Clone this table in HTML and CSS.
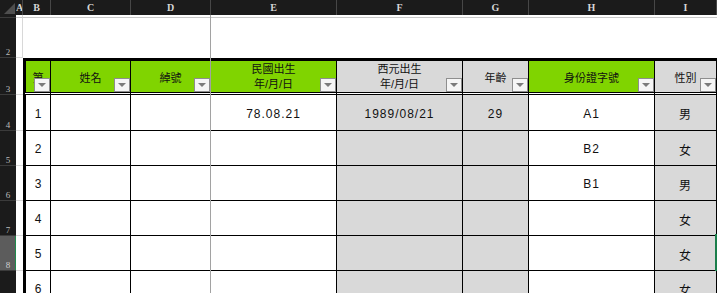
FILE: index.html
```html
<!DOCTYPE html>
<html lang="zh-Hant">
<head>
<meta charset="UTF-8">
<meta name="viewport" content="width=device-width, initial-scale=1.0">
<title>名冊</title>
<link rel="stylesheet" href="styles.css">
</head>
<body>
<div class="sheet">
	<table class="grid">
		<colgroup>
			<col class="w-rh"><col class="w-a"><col class="w-b"><col class="w-c"><col class="w-d">
			<col class="w-e"><col class="w-f"><col class="w-g"><col class="w-h"><col class="w-i">
		</colgroup>
		<tr class="col-head">
			<th class="corner"><span class="corner-mark"></span></th>
			<th>A</th><th>B</th><th>C</th><th>D</th><th>E</th><th>F</th><th>G</th><th>H</th><th>I</th>
		</tr>
		<tr class="r1">
			<th class="rh"></th>
			<td class="ca"></td><td></td><td></td><td></td><td></td><td></td><td></td><td></td><td></td>
		</tr>
		<tr class="r2">
			<th class="rh">2</th>
			<td class="ca"></td><td></td><td></td><td></td><td></td><td></td><td></td><td></td><td></td>
		</tr>
		<tr class="r3">
			<th class="rh">3</th>
			<td class="ca"></td>
			<td class="hd green first">第<span class="filter"></span></td>
			<td class="hd green">姓名<span class="filter"></span></td>
			<td class="hd green">綽號<span class="filter"></span></td>
			<td class="hd green two">民國出生<br>年/月/日<span class="filter"></span></td>
			<td class="hd gray two">西元出生<br>年/月/日<span class="filter"></span></td>
			<td class="hd gray">年齡<span class="filter"></span></td>
			<td class="hd green">身份證字號<span class="filter"></span></td>
			<td class="hd gray">性別<span class="filter"></span></td>
		</tr>
		<tr class="r4">
			<th class="rh">4</th>
			<td class="ca"></td>
			<td class="dc num first">1</td><td class="dc"></td><td class="dc"></td>
			<td class="dc">78.08.21</td><td class="dc gray">1989/08/21</td><td class="dc gray">29</td>
			<td class="dc">A1</td><td class="dc gray">男</td>
		</tr>
		<tr>
			<th class="rh">5</th>
			<td class="ca"></td>
			<td class="dc num first">2</td><td class="dc"></td><td class="dc"></td>
			<td class="dc"></td><td class="dc gray"></td><td class="dc gray"></td>
			<td class="dc">B2</td><td class="dc gray">女</td>
		</tr>
		<tr>
			<th class="rh">6</th>
			<td class="ca"></td>
			<td class="dc num first">3</td><td class="dc"></td><td class="dc"></td>
			<td class="dc"></td><td class="dc gray"></td><td class="dc gray"></td>
			<td class="dc">B1</td><td class="dc gray">男</td>
		</tr>
		<tr>
			<th class="rh">7</th>
			<td class="ca"></td>
			<td class="dc num first">4</td><td class="dc"></td><td class="dc"></td>
			<td class="dc"></td><td class="dc gray"></td><td class="dc gray"></td>
			<td class="dc"></td><td class="dc gray">女</td>
		</tr>
		<tr>
			<th class="rh sel">8</th>
			<td class="ca"></td>
			<td class="dc num first">5</td><td class="dc"></td><td class="dc"></td>
			<td class="dc"></td><td class="dc gray"></td><td class="dc gray"></td>
			<td class="dc"></td><td class="dc gray">女</td>
		</tr>
		<tr>
			<th class="rh">9</th>
			<td class="ca"></td>
			<td class="dc num first">6</td><td class="dc"></td><td class="dc"></td>
			<td class="dc"></td><td class="dc gray"></td><td class="dc gray"></td>
			<td class="dc"></td><td class="dc gray">女</td>
		</tr>
	</table>

	<!-- freeze panes and the active cell edge -->
	<div class="freeze-v"></div>
	<div class="active-cell"></div>
</div>
</body>
</html>
```

FILE: styles.css
```css
* {
	margin: 0;
	padding: 0;
}

body {
	background-color: #fff;
	font-family: "Liberation Sans", "Noto Sans CJK TC", sans-serif;
	color: #111;
	overflow: hidden;
}

.sheet {
	position: relative;
	width: 717px;
	height: 293px;
	overflow: hidden;
}

.grid {
	border-collapse: separate;
	border-spacing: 0;
	table-layout: fixed;
	width: 717px;
}

.grid th,
.grid td {
	padding: 0;
	font-weight: normal;
	box-sizing: border-box;
	overflow: hidden;
	white-space: nowrap;
}

.w-rh { width: 16px; }
.w-a { width: 7px; }
.w-b { width: 28px; }
.w-c { width: 80px; }
.w-d { width: 80px; }
.w-e { width: 126px; }
.w-f { width: 126px; }
.w-g { width: 66px; }
.w-h { width: 126px; }
.w-i { width: 62px; }

/* column letters */
.col-head { height: 15px; }

.col-head th {
	background-color: #1b1b1b;
	color: #d6d6d6;
	font: bold 10px "Liberation Serif", serif;
	line-height: 14px;
	text-align: center;
	border-right: 1px solid #474747;
}

.col-head .corner {
	position: relative;
	border-right: 0;
}

.corner-mark {
	position: absolute;
	right: 1px;
	bottom: 1px;
	width: 0;
	height: 0;
	border-left: 11px solid transparent;
	border-bottom: 11px solid #4e4e4e;
}

/* row numbers */
.rh {
	background-color: #1b1b1b;
	color: #bcbcbc;
	font: 9px "Liberation Serif", serif;
	line-height: 9px;
	text-align: center;
	vertical-align: bottom;
	border-bottom: 1px solid #3b3b3b;
}

.rh.sel {
	background-color: #5c5c5c;
	color: #d0d0d0;
	box-shadow: inset -1px 0 0 #1f8a4c;
}

.r1 { height: 3px; }
.r2 { height: 40px; }
.r3 { height: 37px; }
.r4 { height: 36px; }
tr { height: 35px; }

.r1 td {
	border-bottom: 1px solid #c9c9c9;
}

.ca {
	border-bottom: 1px solid #d8d8d8;
}

.r1 .ca,
.r2 .ca {
	border-right: 1px solid #d8d8d8;
}

/* header row with filters */
.grid .hd {
	position: relative;
	border-top: 3px solid #000;
	border-right: 1px solid #000;
	border-bottom: 3px double #000;
	background-clip: padding-box;
	font-size: 11px;
	line-height: 15px;
	text-align: center;
	vertical-align: middle;
	padding-top: 4px;
}

.grid .hd.two {
	padding-top: 1px;
}

.hd.green { background-color: #80d400; }
.hd.gray { background-color: #d9d9d9; }

.grid .first {
	border-left: 3px solid #000;
}

.filter {
	position: absolute;
	right: 0;
	bottom: 0;
	width: 16px;
	height: 14px;
	box-sizing: border-box;
	border: 1px solid #8e8e8e;
	background-color: #f5f5f5;
}

.filter::after {
	content: "";
	position: absolute;
	left: 3px;
	top: 4px;
	border-left: 4px solid transparent;
	border-right: 4px solid transparent;
	border-top: 4px solid #7b7b7b;
}

/* data cells */
.grid .dc {
	border-right: 1px solid #000;
	border-bottom: 1px solid #000;
	text-align: center;
	vertical-align: middle;
	font-size: 12px;
	letter-spacing: 1px;
	padding-top: 2px;
}

.dc.gray { background-color: #d9d9d9; }

.grid .dc.num {
	font-size: 12px;
	letter-spacing: 0;
}

.freeze-v {
	position: absolute;
	left: 210px;
	top: 15px;
	width: 1px;
	height: 278px;
	background-color: #a2a2a2;
}

.active-cell {
	position: absolute;
	left: 715px;
	top: 234px;
	width: 2px;
	height: 37px;
	background-color: #1a7f4b;
}
```
